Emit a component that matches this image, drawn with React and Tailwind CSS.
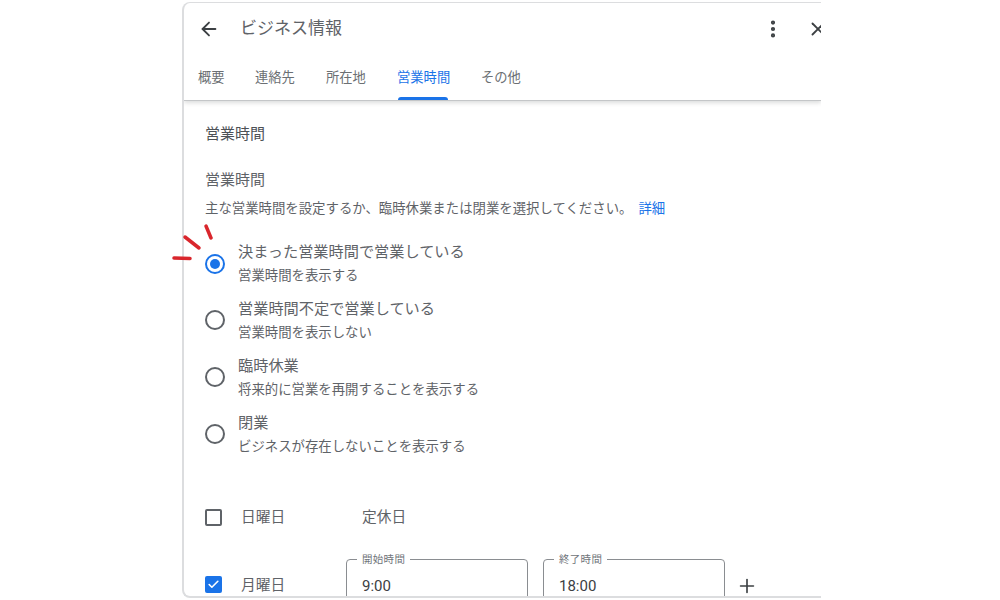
import React from 'react'
import { ArrowLeft, MoreVertical, X, Plus, Check } from 'lucide-react'

const tabs = [
  { label: '概要', width: 'w-[57px]' },
  { label: '連絡先', width: 'w-[71px]' },
  { label: '所在地', width: 'w-[71px]' },
  { label: '営業時間', width: 'w-[84px]', active: true },
  { label: 'その他', width: 'w-[60px]' },
]

const options = [
  { title: '決まった営業時間で営業している', sub: '営業時間を表示する', checked: true },
  { title: '営業時間不定で営業している', sub: '営業時間を表示しない' },
  { title: '臨時休業', sub: '将来的に営業を再開することを表示する' },
  { title: '閉業', sub: 'ビジネスが存在しないことを表示する' },
]

function Radio({ checked }) {
  return (
    <span
      className={`flex h-[20px] w-[20px] items-center justify-center rounded-full border-2 ${
        checked ? 'border-[#1a73e8]' : 'mb-[2px] border-[#5f6368]'
      }`}
    >
      {checked && <span className="h-[10px] w-[10px] rounded-full bg-[#1a73e8]" />}
    </span>
  )
}

function TimeField({ label, value }) {
  return (
    <div className="relative h-[60px] w-[182px] rounded-t-[4px] border border-[#8a8d91] px-[15px] pt-[15px] text-[15px] text-[#3c4043]">
      <span className="absolute left-[10px] top-[-7px] bg-white px-[5px] text-[10.5px] leading-[13px] tracking-[0.3px] text-[#70757a]">
        {label}
      </span>
      {value}
    </div>
  )
}

export default function App() {
  return (
    <div className="relative h-[600px] w-[1000px] overflow-hidden bg-white font-['Roboto','Noto_Sans_CJK_JP',sans-serif]">
      <div className="ml-[182px] mt-[2px] h-[596px] w-[639px] overflow-hidden rounded-l-[8px] border-b-2 border-l-2 border-t border-[#dcdddf] bg-white">
        {/* Header and tabs */}
        <div className="h-[98px] border-b border-[#c4c6c8] shadow-[0_2px_4px_rgba(60,64,67,0.18)]">
          <div className="flex h-[52px] items-center pl-[14px]">
            <ArrowLeft className="h-[22px] w-[22px] shrink-0 text-[#3c4043]" strokeWidth={2} />
            <span className="ml-[20px] w-[420px] shrink-0 whitespace-nowrap text-[17px] text-[#5f6368]">ビジネス情報</span>
            <MoreVertical className="ml-[102px] h-[22px] w-[22px] shrink-0 text-[#3c4043]" strokeWidth={2.6} />
            <X className="ml-[23px] h-[22px] w-[22px] shrink-0 text-[#3c4043]" strokeWidth={2} />
          </div>
          <div className="flex h-[45px] pl-[14px]">
            {tabs.map((tab) => (
              <div
                key={tab.label}
                className={`relative ${tab.width} shrink-0 pt-[13px] text-[13.3px] leading-[20px] ${
                  tab.active ? 'text-[#1a73e8]' : 'text-[#6b6f73]'
                }`}
              >
                {tab.label}
                {tab.active && (
                  <span className="absolute bottom-0 left-[1px] h-[3px] w-[50px] rounded-t-[3px] bg-[#1a73e8]" />
                )}
              </div>
            ))}
          </div>
        </div>

        {/* Body */}
        <div className="pl-[21px]">
          <h2 className="mt-[22px] text-[15px] leading-[22px] font-normal text-[#4d5156]">営業時間</h2>
          <h3 className="mt-[24px] text-[15px] leading-[22px] font-normal text-[#5f6368]">営業時間</h3>
          <p className="mt-[8px] text-[13.4px] leading-[20px] text-[#5f6368]">
            主な営業時間を設定するか、臨時休業または閉業を選択してください。
            <span className="ml-[6px] text-[#1a73e8]">詳細</span>
          </p>

          <div className="mt-[21px] flex flex-col gap-[9px]">
            {options.map((option) => (
              <div key={option.title} className="flex h-[48px] items-center">
                <Radio checked={option.checked} />
                <div className="ml-[13px]">
                  <div className="text-[15.2px] leading-[24px] text-[#5f6368]">{option.title}</div>
                  <div className="text-[13.4px] leading-[24px] text-[#5f6368]">{option.sub}</div>
                </div>
              </div>
            ))}
          </div>

          <div className="mt-[46px] flex h-[24px] items-center text-[14.7px] text-[#5f6368]">
            <span className="h-[17px] w-[17px] rounded-[2px] border-2 border-[#5f6368]" />
            <span className="ml-[19px] w-[121px]">日曜日</span>
            <span>定休日</span>
          </div>

          <div className="mt-[30px] flex items-start text-[14.7px] text-[#5f6368]">
            <span className="mt-[17px] flex h-[17px] w-[17px] items-center justify-center rounded-[2px] bg-[#1a73e8]">
              <Check className="h-[13px] w-[13px] text-white" strokeWidth={3} />
            </span>
            <span className="ml-[19px] mt-[15px] w-[105px]">月曜日</span>
            <TimeField label="開始時間" value="9:00" />
            <div className="ml-[15px]">
              <TimeField label="終了時間" value="18:00" />
            </div>
            <Plus className="ml-[11px] mt-[16px] h-[22px] w-[22px] text-[#3c4043]" strokeWidth={1.8} />
          </div>
        </div>
      </div>

      {/* Hand-drawn red marks around the radio button */}
      <svg className="absolute left-[165px] top-[215px] h-[60px] w-[60px]" viewBox="0 0 60 60" fill="none">
        <path d="M9 43 L25 43.5" stroke="#d9262c" strokeWidth="3.5" strokeLinecap="round" />
        <path d="M20 22 L34 33" stroke="#d9262c" strokeWidth="3.5" strokeLinecap="round" />
        <path d="M41 11 L46 23" stroke="#d9262c" strokeWidth="3.5" strokeLinecap="round" />
      </svg>
    </div>
  )
}
